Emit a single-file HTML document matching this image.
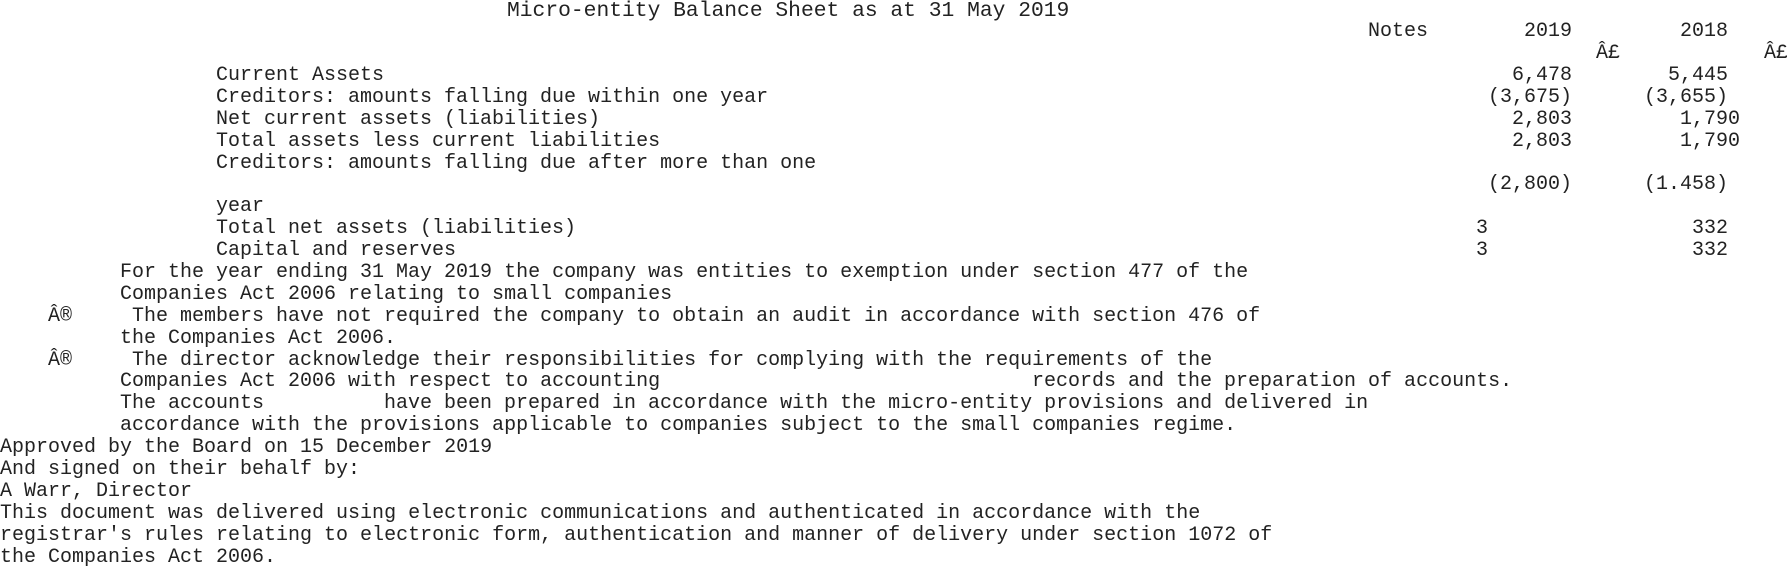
<!DOCTYPE html>
<html><head><meta charset="utf-8"><style>
html,body{margin:0;padding:0;background:#fff;}
body{width:1787px;height:567px;position:relative;overflow:hidden;font-family:"Liberation Mono","Courier New",monospace;font-size:20px;color:#222;}
div{position:absolute;white-space:pre;line-height:22px;}
</style></head><body>
<div style="top:0px;left:507px;font-size:21.3px">Micro-entity Balance Sheet as at 31 May 2019</div>
<div style="top:21px;left:1368px">Notes</div><div style="top:21px;left:1524px">2019</div><div style="top:21px;left:1680px">2018</div>
<div style="top:43px;left:1596px">Â£</div><div style="top:43px;left:1764px">Â£</div>
<div style="top:65px;left:216px">Current Assets</div><div style="top:65px;left:1512px">6,478</div><div style="top:65px;left:1668px">5,445</div>
<div style="top:87px;left:216px">Creditors: amounts falling due within one year</div><div style="top:87px;left:1488px">(3,675)</div><div style="top:87px;left:1644px">(3,655)</div>
<div style="top:109px;left:216px">Net current assets (liabilities)</div><div style="top:109px;left:1512px">2,803</div><div style="top:109px;left:1680px">1,790</div>
<div style="top:131px;left:216px">Total assets less current liabilities</div><div style="top:131px;left:1512px">2,803</div><div style="top:131px;left:1680px">1,790</div>
<div style="top:153px;left:216px">Creditors: amounts falling due after more than one</div>
<div style="top:174px;left:1488px">(2,800)</div><div style="top:174px;left:1644px">(1.458)</div>
<div style="top:196px;left:216px">year</div>
<div style="top:218px;left:216px">Total net assets (liabilities)</div><div style="top:218px;left:1476px">3</div><div style="top:218px;left:1692px">332</div>
<div style="top:240px;left:216px">Capital and reserves</div><div style="top:240px;left:1476px">3</div><div style="top:240px;left:1692px">332</div>
<div style="top:262px;left:120px">For the year ending 31 May 2019 the company was entities to exemption under section 477 of the</div>
<div style="top:284px;left:120px">Companies Act 2006 relating to small companies</div>
<div style="top:306px;left:48px">Â®</div><div style="top:306px;left:132px">The members have not required the company to obtain an audit in accordance with section 476 of</div>
<div style="top:328px;left:120px">the Companies Act 2006.</div>
<div style="top:350px;left:48px">Â®</div><div style="top:350px;left:132px">The director acknowledge their responsibilities for complying with the requirements of the</div>
<div style="top:371px;left:120px">Companies Act 2006 with respect to accounting</div><div style="top:371px;left:1032px">records and the preparation of accounts.</div>
<div style="top:393px;left:120px">The accounts</div><div style="top:393px;left:384px">have been prepared in accordance with the micro-entity provisions and delivered in</div>
<div style="top:415px;left:120px">accordance with the provisions applicable to companies subject to the small companies regime.</div>
<div style="top:437px;left:0px">Approved by the Board on 15 December 2019</div>
<div style="top:459px;left:0px">And signed on their behalf by:</div>
<div style="top:481px;left:0px">A Warr, Director</div>
<div style="top:503px;left:0px">This document was delivered using electronic communications and authenticated in accordance with the</div>
<div style="top:525px;left:0px">registrar's rules relating to electronic form, authentication and manner of delivery under section 1072 of</div>
<div style="top:547px;left:0px">the Companies Act 2006.</div>
</body></html>
